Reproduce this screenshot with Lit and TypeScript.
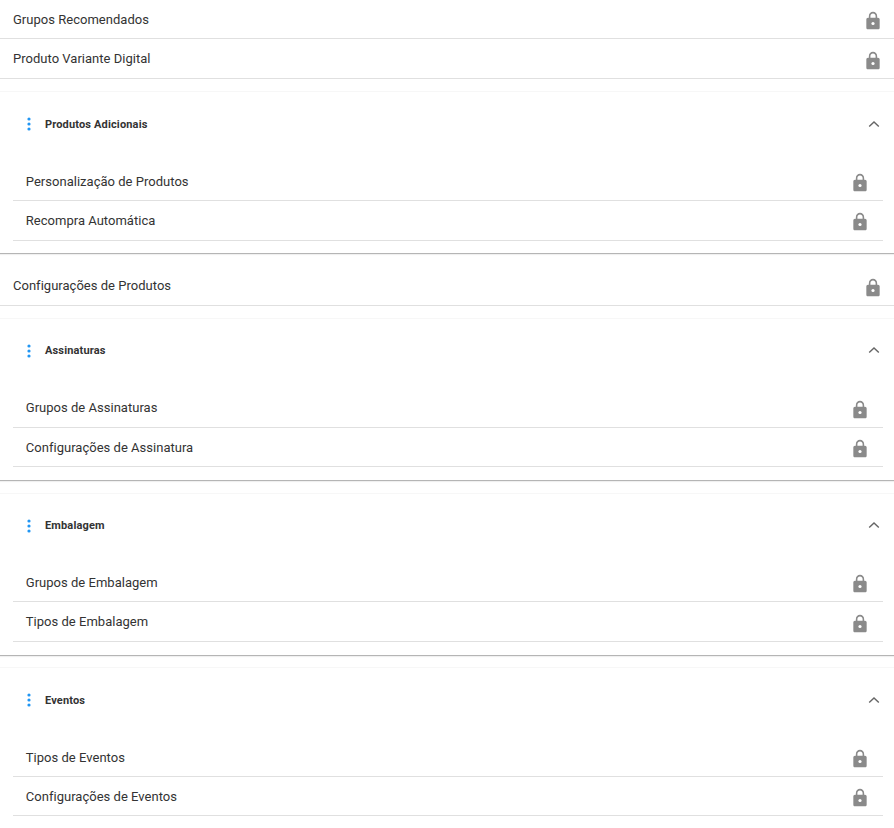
import { LitElement, html, css } from "lit";
import { customElement } from "lit/decorators.js";

const lock = html`<svg class="lock" viewBox="0 0 24 24" width="20" height="20"><path fill="#8a8a8a" d="M18 8h-1V6c0-2.76-2.24-5-5-5S7 3.24 7 6v2H6c-1.1 0-2 .9-2 2v10c0 1.1.9 2 2 2h12c1.1 0 2-.9 2-2V10c0-1.1-.9-2-2-2zm-2.9 0H8.9V6c0-1.71 1.39-3.1 3.1-3.1 1.71 0 3.1 1.39 3.1 3.1v2z"/><circle cx="12" cy="15" r="1.9" fill="#fff"/></svg>`;

type Sec = { title: string; items: string[] };
const row = (t: string) => html`<div class="row"><span>${t}</span>${lock}</div>`;
const section = (s: Sec) => html`<section class="panel">
  <header class="head">
    <svg class="dots" width="4" height="14" viewBox="0 0 4 14"><circle cx="2" cy="2" r="1.6"/><circle cx="2" cy="7" r="1.6"/><circle cx="2" cy="12" r="1.6"/></svg>
    <h3>${s.title}</h3>
    <svg class="chev" width="12" height="8" viewBox="0 0 12 8"><path d="M1.2 6.6 6 2l4.8 4.6" fill="none" stroke="#666" stroke-width="1.4"/></svg>
  </header>
  <div class="items">${s.items.map(row)}</div>
</section>`;

@customElement("app-root")
export class AppRoot extends LitElement {
  static styles = css`
    :host { display: block; width: 894px; height: 828px; overflow: hidden; background: #fff;
      font-family: Roboto, "Liberation Sans", sans-serif; color: #333; font-size: 13px; }
    .row { display: flex; align-items: center; justify-content: space-between; height: 38.4px;
      border-bottom: 1px solid #e0e0e0; padding: 0 11px 0 13px; letter-spacing: 0.02px; }
    .row span { line-height: 1; }
    .lock { display: block; margin-top: 4px; }
    .top { padding-bottom: 0.9px; }
    .conf { margin-top: 12.5px; }
    .conf .row span { margin-bottom: 1px; }
    .panel { margin-top: 11.6px; border-top: 1px solid #f7f7f7; border-bottom: 1px solid #b5b5b5;
      box-shadow: 0 1px 1px rgba(0, 0, 0, 0.06); padding: 0 11px 12.8px 13px; }
    .head { display: flex; align-items: center; height: 64px; margin-bottom: 5.5px; padding-left: 13.5px; }
    .dots { fill: #2196f3; margin-right: 14.5px; }
    h3 { margin: 0; font-size: 11px; font-weight: 700; color: #333; flex: 1; letter-spacing: 0.15px; }
    .chev { margin-right: 3.5px; margin-bottom: 1px; }
    .items .row { padding-left: 12.8px; padding-right: 13px; }
    .items .row span { margin-top: 0.7px; }
  `;
  render() {
    return html`<div class="root">
      <div class="top">${row("Grupos Recomendados")}${row("Produto Variante Digital")}</div>
      ${section({ title: "Produtos Adicionais", items: ["Personalização de Produtos", "Recompra Automática"] })}
      <div class="conf">${row("Configurações de Produtos")}</div>
      ${section({ title: "Assinaturas", items: ["Grupos de Assinaturas", "Configurações de Assinatura"] })}
      ${section({ title: "Embalagem", items: ["Grupos de Embalagem", "Tipos de Embalagem"] })}
      ${section({ title: "Eventos", items: ["Tipos de Eventos", "Configurações de Eventos"] })}
    </div>`;
  }
}
